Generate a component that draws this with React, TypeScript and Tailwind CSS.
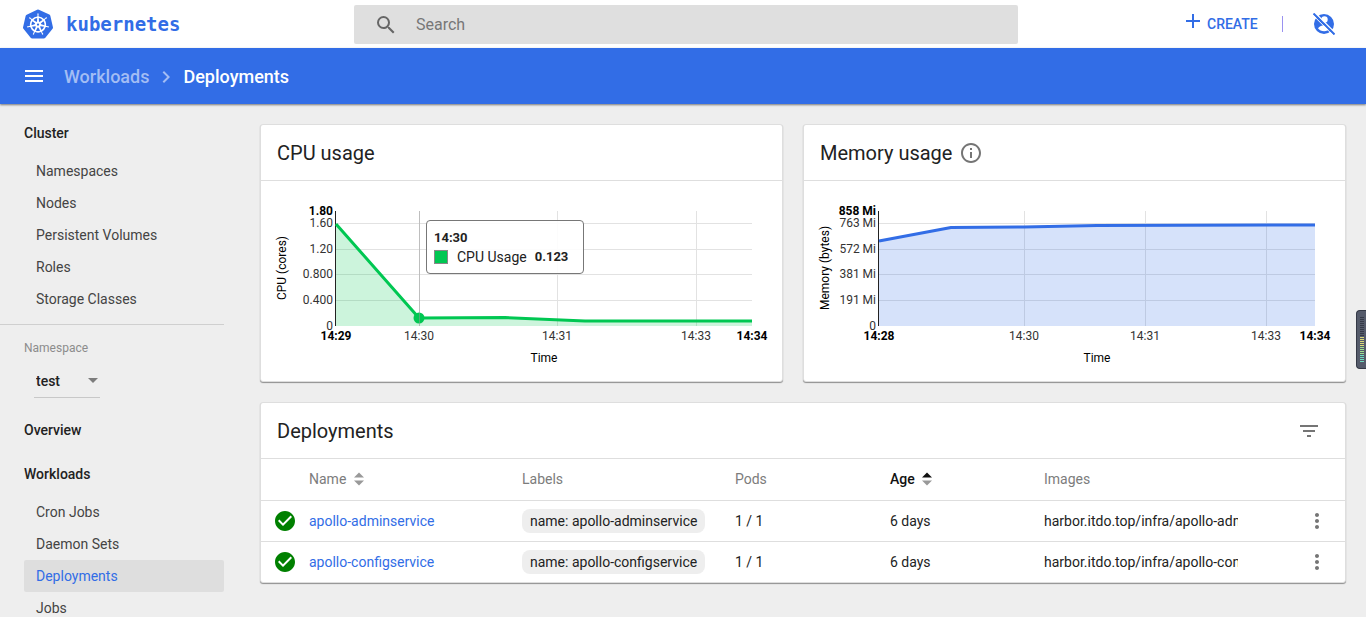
import React from 'react';
import {
  MdAdd,
  MdCheckCircle,
  MdChevronRight,
  MdFilterList,
  MdInfoOutline,
  MdMenu,
  MdMoreVert,
  MdSearch,
} from 'react-icons/md';
import { SiKubernetes } from 'react-icons/si';

interface Tick {
  pos: number;
  label: string;
  bold?: boolean;
}

interface UsageChartProps {
  width: number;
  color: string;
  yTitle: string;
  points: [number, number][];
  xTicks: Tick[];
  yTicks: Tick[];
  children?: React.ReactNode;
}

interface Deployment {
  name: string;
  label: string;
  pods: string;
  age: string;
  image: string;
}

const clusterItems = ['Namespaces', 'Nodes', 'Persistent Volumes', 'Roles', 'Storage Classes'];
const workloadItems = ['Cron Jobs', 'Daemon Sets', 'Deployments', 'Jobs'];

const deployments: Deployment[] = [
  {
    name: 'apollo-adminservice',
    label: 'name: apollo-adminservice',
    pods: '1 / 1',
    age: '6 days',
    image: 'harbor.itdo.top/infra/apollo-adminservice',
  },
  {
    name: 'apollo-configservice',
    label: 'name: apollo-configservice',
    pods: '1 / 1',
    age: '6 days',
    image: 'harbor.itdo.top/infra/apollo-configservice',
  },
];

const PLOT_LEFT = 75;
const PLOT_TOP = 30;
const PLOT_BOTTOM = 145;

const UsageChart: React.FC<UsageChartProps> = ({ width, color, yTitle, points, xTicks, yTicks, children }) => {
  const right = points[points.length - 1][0];
  const line = points.map(p => p.join(',')).join(' ');

  return (
    <svg viewBox={`0 0 ${width} 200`} className="block w-full h-auto text-xs" role="img" aria-label={yTitle}>
      <g stroke="#e2e2e2" shapeRendering="crispEdges">
        {yTicks.filter(t => !t.bold && t.label !== '0').map(t => (
          <line key={t.label} x1={PLOT_LEFT} x2={right} y1={t.pos + 0.5} y2={t.pos + 0.5} />
        ))}
        {xTicks.filter(t => !t.bold).map(t => (
          <line key={t.label} x1={t.pos + 0.5} x2={t.pos + 0.5} y1={PLOT_TOP} y2={PLOT_BOTTOM} />
        ))}
      </g>
      <polygon
        points={`${PLOT_LEFT},${PLOT_BOTTOM} ${line} ${right},${PLOT_BOTTOM}`}
        fill={color}
        fillOpacity={0.2}
      />
      <line x1={74.5} x2={74.5} y1={PLOT_TOP} y2={PLOT_BOTTOM} stroke="#222" shapeRendering="crispEdges" />
      <polyline points={line} fill="none" stroke={color} strokeWidth={3} strokeLinejoin="round" />
      {yTicks.map(t => (
        <text key={t.label} x={72} y={t.pos + 4} textAnchor="end" fontWeight={t.bold ? 700 : 400} fill={t.bold ? '#000' : '#333'}>
          {t.label}
        </text>
      ))}
      {xTicks.map(t => (
        <text key={t.label} x={t.pos} y={159} textAnchor="middle" fontWeight={t.bold ? 700 : 400} fill={t.bold ? '#000' : '#333'}>
          {t.label}
        </text>
      ))}
      <text x={(PLOT_LEFT + right) / 2} y={181} textAnchor="middle">Time</text>
      <text transform="translate(25 87) rotate(-90)" textAnchor="middle">{yTitle}</text>
      {children}
    </svg>
  );
};

const Card: React.FC<{ className?: string; children: React.ReactNode }> = ({ className = '', children }) => (
  <section
    className={`bg-white border border-[#dedede] rounded-[3px] shadow-[0_1px_1px_rgba(0,0,0,0.4)] ${className}`}
  >
    {children}
  </section>
);

const CardHeader: React.FC<{ children: React.ReactNode }> = ({ children }) => (
  <div className="flex items-center h-14 px-4 border-b border-[#dedede]">{children}</div>
);

const SortIcon: React.FC<{ active?: boolean }> = ({ active }) => (
  <svg width="10" height="14" viewBox="0 0 10 14">
    <path d="M0 5.5L5 0.5l5 5z" fill={active ? '#111' : '#999'} />
    <path d="M0 8.5l5 5 5-5z" fill="#999" />
  </svg>
);

const NavItem: React.FC<{ label: string; active?: boolean }> = ({ label, active }) => (
  <a
    href="#"
    className={`block h-8 ml-6 px-3 leading-8 rounded-[2px] ${active ? 'bg-[#dedede] text-[#326de6]' : 'text-[#444]'}`}
  >
    {label}
  </a>
);

const NavHeading: React.FC<{ label: string }> = ({ label }) => (
  <a href="#" className="block h-11 pl-6 leading-[44px] font-medium">
    {label}
  </a>
);

const UserOffIcon = () => (
  <svg width="22" height="22" viewBox="0 0 22 22">
    <circle cx="11" cy="11" r="10" fill="#326de6" />
    <circle cx="11.5" cy="6.5" r="3.2" fill="#fff" />
    <path d="M5 15.2c1.2-2 4-3 6.2-3s4.7 1 5.8 3c-1.3 1.9-3.5 3-5.9 3s-4.8-1.1-6.1-3z" fill="#fff" />
    <path d="M2.2 0L22 19.8" stroke="#fff" strokeWidth="1.5" />
    <path d="M0.5 0.5l21 21" stroke="#326de6" strokeWidth="2" />
    <path d="M0 2.2L19.8 22" stroke="#fff" strokeWidth="1" />
  </svg>
);

const Sidebar = () => (
  <nav className="w-56 shrink-0 pt-[7px] overflow-hidden">
    <NavHeading label="Cluster" />
    {clusterItems.map(item => (
      <NavItem key={item} label={item} />
    ))}
    <div className="mt-[9px] pt-[15px] pb-[10px] border-t border-[#cfcfcf]">
      <label htmlFor="namespace" className="block pl-6 text-xs leading-4 text-[#8c8c8c]">
        Namespace
      </label>
      <div className="relative w-[66px] h-8 mt-[10px] ml-[34px] border-b border-[#c8c8c8]">
        <select
          id="namespace"
          className="w-full h-full pl-[2px] pb-0.5 appearance-none bg-transparent font-medium outline-none"
          defaultValue="test"
        >
          <option value="test">test</option>
        </select>
        <svg className="absolute right-[2px] top-3 pointer-events-none" width="10" height="5" viewBox="0 0 10 5">
          <path d="M0 0h10L5 5z" fill="#7c7c7c" />
        </svg>
      </div>
    </div>
    <NavHeading label="Overview" />
    <NavHeading label="Workloads" />
    {workloadItems.map(item => (
      <NavItem key={item} label={item} active={item === 'Deployments'} />
    ))}
  </nav>
);

const CpuCard = () => (
  <Card className="mr-5">
    <CardHeader>
      <h2 className="text-xl">CPU usage</h2>
    </CardHeader>
    <div className="relative">
      <UsageChart
        width={521}
        color="#00c752"
        yTitle="CPU (cores)"
        points={[[75, 43], [158, 137], [244, 136.5], [324, 140], [491, 140]]}
        xTicks={[
          { pos: 75, label: '14:29', bold: true },
          { pos: 158, label: '14:30' },
          { pos: 296, label: '14:31' },
          { pos: 435, label: '14:33' },
          { pos: 491, label: '14:34', bold: true },
        ]}
        yTicks={[
          { pos: 30, label: '1.80', bold: true },
          { pos: 42, label: '1.60' },
          { pos: 68, label: '1.20' },
          { pos: 93, label: '0.800' },
          { pos: 119, label: '0.400' },
          { pos: 145, label: '0' },
        ]}
      >
        <circle cx={158} cy={137} r={5.5} fill="#00c752" />
        <line x1={158.5} x2={158.5} y1={30} y2={145} stroke="#999" strokeOpacity={0.5} />
      </UsageChart>
      <div className="absolute left-[165px] top-[39px] w-[158px] h-[54px] px-[7px] pt-2 bg-white/90 border border-[#777] rounded-[4px] text-[#222]">
        <div className="font-bold leading-[18px] text-[13px]">14:30</div>
        <div className="flex items-center h-5">
          <span className="w-[14px] h-[14px] bg-[#00c752] border border-[#888]" />
          <span className="ml-[9px]">CPU Usage</span>
          <span className="ml-2 font-bold text-[13px]">0.123</span>
        </div>
      </div>
    </div>
  </Card>
);

const MemoryCard = () => (
  <Card>
    <CardHeader>
      <h2 className="text-xl">Memory usage</h2>
      <MdInfoOutline size={24} className="ml-[7px] text-[#757575]" />
    </CardHeader>
    <UsageChart
      width={541}
      color="#326de6"
      yTitle="Memory (bytes)"
      points={[[75, 60], [147, 46.5], [220, 46], [293, 44.5], [511, 44]]}
      xTicks={[
        { pos: 75, label: '14:28', bold: true },
        { pos: 220, label: '14:30' },
        { pos: 341, label: '14:31' },
        { pos: 462, label: '14:33' },
        { pos: 511, label: '14:34', bold: true },
      ]}
      yTicks={[
        { pos: 30, label: '858 Mi', bold: true },
        { pos: 42, label: '763 Mi' },
        { pos: 68, label: '572 Mi' },
        { pos: 93, label: '381 Mi' },
        { pos: 119, label: '191 Mi' },
        { pos: 145, label: '0' },
      ]}
    />
  </Card>
);

const DeploymentsCard = () => (
  <Card className="mt-5">
    <CardHeader>
      <h2 className="flex-1 text-xl">Deployments</h2>
      <button type="button" aria-label="Filter" className="mr-2 text-[#757575]">
        <MdFilterList size={24} />
      </button>
    </CardHeader>
    <table className="w-full table-fixed text-left">
      <colgroup>
        <col className="w-12" />
        <col className="w-[213px]" />
        <col className="w-[213px]" />
        <col className="w-[155px]" />
        <col className="w-[154px]" />
        <col />
        <col className="w-14" />
      </colgroup>
      <thead>
        <tr className="h-[41px] text-[#7c7c7c]">
          <th />
          <th className="font-normal">
            <span className="flex items-center gap-2">Name <SortIcon /></span>
          </th>
          <th className="font-normal">Labels</th>
          <th className="font-normal">Pods</th>
          <th className="font-medium text-[#111]">
            <span className="flex items-center gap-[7px]">Age <SortIcon active /></span>
          </th>
          <th className="font-normal">Images</th>
          <th />
        </tr>
      </thead>
      <tbody>
        {deployments.map(d => (
          <tr key={d.name} className="h-[41px] border-t border-[#dedede]">
            <td>
              <MdCheckCircle size={24} className="ml-3 text-[#008000]" />
            </td>
            <td>
              <a href="#" className="text-[#326de6]">{d.name}</a>
            </td>
            <td>
              <span className="block w-fit h-6 px-2 leading-6 rounded-lg bg-[#eee]">{d.label}</span>
            </td>
            <td>{d.pods}</td>
            <td>{d.age}</td>
            <td className="pr-[51px]">
              <div className="overflow-hidden whitespace-nowrap">{d.image}</div>
            </td>
            <td>
              <button type="button" aria-label={`Actions for ${d.name}`} className="block ml-4 text-[#757575]">
                <MdMoreVert size={24} />
              </button>
            </td>
          </tr>
        ))}
      </tbody>
    </table>
  </Card>
);

// level meter docked at the window edge
const meterBars = Array.from({ length: 23 }, (_, i) => {
  if (i < 10) return '#353a47';
  return i < 15 ? '#d8d878' : i < 19 ? '#9fe08f' : '#6fdcc0';
});

const EdgeMeter = () => (
  <div className="absolute right-0 top-[310px] w-[10px] h-[59px] pl-[3px] pt-[6px] rounded-l bg-[#555b6b] border border-r-0 border-[#343946]">
    {meterBars.map((color, i) => (
      <div key={i} className="w-1 h-px mb-px" style={{ backgroundColor: color }} />
    ))}
  </div>
);

export default function App() {
  return (
    <div className="relative flex flex-col h-screen overflow-hidden bg-[#eee] font-['Roboto',sans-serif] text-sm text-[#222]">
      <header className="flex items-center h-12 shrink-0 bg-white">
        <a href="#" className="flex items-center w-[354px] pl-[23px] text-[#326de6]">
          <SiKubernetes size={30} />
          <span className="ml-[13px] font-['DejaVu_Sans_Mono',monospace] font-bold text-[19px] leading-6">kubernetes</span>
        </a>
        <label className="flex flex-1 items-center h-[39px] mt-px pl-5 rounded-[2px] bg-[#dfdfdf]">
          <MdSearch size={24} className="text-[#666]" />
          <input
            type="text"
            placeholder="Search"
            aria-label="Search"
            className="flex-1 ml-[18px] bg-transparent text-base placeholder:text-[#777] outline-none"
          />
        </label>
        <div className="flex items-center w-[348px] pl-[163px] text-[#326de6]">
          <button type="button" className="flex items-center gap-[2px] font-medium">
            <MdAdd size={24} className="mb-1.5" />
            CREATE
          </button>
          <span className="w-px h-4 ml-6 bg-[#9a92f0]" />
          <button type="button" aria-label="User" className="ml-[30px]">
            <UserOffIcon />
          </button>
        </div>
      </header>

      <div className="relative flex items-center h-14 shrink-0 pl-[22px] bg-[#326de6] text-white text-lg font-medium shadow-[0_1px_2px_rgba(0,0,0,0.5)]">
        <button type="button" aria-label="Menu">
          <MdMenu size={24} />
        </button>
        <div className="flex items-center pt-0.5">
          <a href="#" className="ml-[18px] text-[#a3bdf4]">Workloads</a>
          <MdChevronRight size={24} className="mx-[5px] text-[#a3bdf4]" />
          <span>Deployments</span>
        </div>
      </div>

      <div className="flex flex-1 min-h-0">
        <Sidebar />
        <main className="flex-1 min-w-0 pt-5 pl-9 pr-5">
          <div className="grid grid-cols-2">
            <CpuCard />
            <MemoryCard />
          </div>
          <DeploymentsCard />
        </main>
      </div>

      <EdgeMeter />
    </div>
  );
}
